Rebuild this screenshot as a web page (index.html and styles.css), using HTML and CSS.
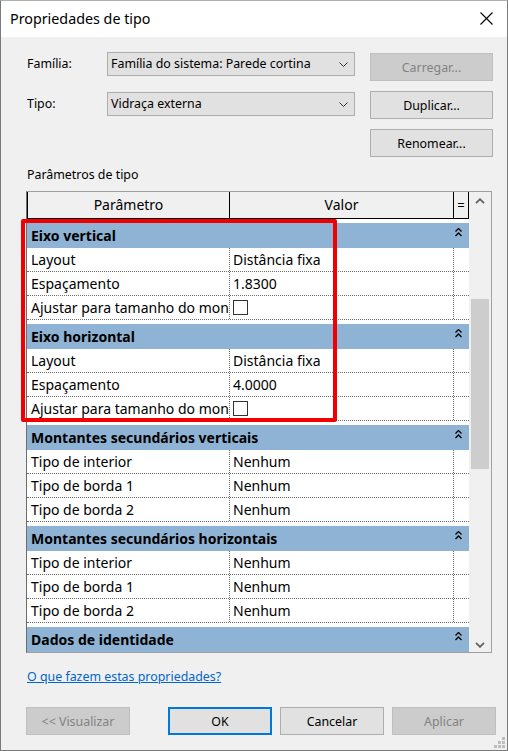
FILE: index.html
```html
<!DOCTYPE html>
<html lang="pt">
<head>
<meta charset="utf-8">
<title>Propriedades de tipo</title>
<link rel="stylesheet" href="styles.css">
</head>
<body>
<div class="window">
  <div class="titlebar">
    <span class="title">Propriedades de tipo</span>
    <svg class="close" width="13" height="13" viewBox="0 0 13 13"><path d="M0.5 0.5 L12.5 12.5 M12.5 0.5 L0.5 12.5" stroke="#000" stroke-width="1.1" fill="none"/></svg>
  </div>
  <div class="content">
    <div class="form-row r1">
      <label class="lbl">Família:</label>
      <div class="combo"><span>Família do sistema: Parede cortina</span><svg width="9" height="5" viewBox="0 0 9 5"><path d="M0.5 0.5 L4.5 4.5 L8.5 0.5" stroke="#333" fill="none"/></svg></div>
      <button class="btn disabled side">Carregar...</button>
    </div>
    <div class="form-row r2">
      <label class="lbl">Tipo:</label>
      <div class="combo"><span>Vidraça externa</span><svg width="9" height="5" viewBox="0 0 9 5"><path d="M0.5 0.5 L4.5 4.5 L8.5 0.5" stroke="#333" fill="none"/></svg></div>
      <button class="btn side">Duplicar...</button>
    </div>
    <div class="form-row r3">
      <button class="btn side col3">Renomear...</button>
    </div>
    <div class="section-label">Parâmetros de tipo</div>
    <div class="table-wrap">
      <div class="table">
        <div class="list">
          <div class="hdr">
            <div class="hc c1">Parâmetro</div>
            <div class="hc c2">Valor</div>
            <div class="hc c3">=</div>
          </div>
          <div class="grp"><div class="band"><span>Eixo vertical</span><svg class="dchev" width="7" height="9" viewBox="0 0 7 9"><path d="M0.5 3.5 L3.5 0.5 L6.5 3.5 M0.5 8 L3.5 5 L6.5 8" stroke="#000" stroke-width="1.3" fill="none"/></svg></div></div>
          <div class="row"><div class="p">Layout</div><div class="v">Distância fixa</div><div class="e"></div></div>
          <div class="row"><div class="p">Espaçamento</div><div class="v">1.8300</div><div class="e"></div></div>
          <div class="row"><div class="p tight">Ajustar para tamanho do mon</div><div class="v"><span class="chk"></span></div><div class="e"></div></div>
          <div class="grp"><div class="band"><span>Eixo horizontal</span><svg class="dchev" width="7" height="9" viewBox="0 0 7 9"><path d="M0.5 3.5 L3.5 0.5 L6.5 3.5 M0.5 8 L3.5 5 L6.5 8" stroke="#000" stroke-width="1.3" fill="none"/></svg></div></div>
          <div class="row"><div class="p">Layout</div><div class="v">Distância fixa</div><div class="e"></div></div>
          <div class="row"><div class="p">Espaçamento</div><div class="v">4.0000</div><div class="e"></div></div>
          <div class="row"><div class="p tight">Ajustar para tamanho do mon</div><div class="v"><span class="chk"></span></div><div class="e"></div></div>
          <div class="grp"><div class="band"><span>Montantes secundários verticais</span><svg class="dchev" width="7" height="9" viewBox="0 0 7 9"><path d="M0.5 3.5 L3.5 0.5 L6.5 3.5 M0.5 8 L3.5 5 L6.5 8" stroke="#000" stroke-width="1.3" fill="none"/></svg></div></div>
          <div class="row"><div class="p">Tipo de interior</div><div class="v">Nenhum</div><div class="e"></div></div>
          <div class="row"><div class="p">Tipo de borda 1</div><div class="v">Nenhum</div><div class="e"></div></div>
          <div class="row"><div class="p">Tipo de borda 2</div><div class="v">Nenhum</div><div class="e"></div></div>
          <div class="grp"><div class="band"><span>Montantes secundários horizontais</span><svg class="dchev" width="7" height="9" viewBox="0 0 7 9"><path d="M0.5 3.5 L3.5 0.5 L6.5 3.5 M0.5 8 L3.5 5 L6.5 8" stroke="#000" stroke-width="1.3" fill="none"/></svg></div></div>
          <div class="row"><div class="p">Tipo de interior</div><div class="v">Nenhum</div><div class="e"></div></div>
          <div class="row"><div class="p">Tipo de borda 1</div><div class="v">Nenhum</div><div class="e"></div></div>
          <div class="row"><div class="p">Tipo de borda 2</div><div class="v">Nenhum</div><div class="e"></div></div>
          <div class="grp"><div class="band"><span>Dados de identidade</span><svg class="dchev" width="7" height="9" viewBox="0 0 7 9"><path d="M0.5 3.5 L3.5 0.5 L6.5 3.5 M0.5 8 L3.5 5 L6.5 8" stroke="#000" stroke-width="1.3" fill="none"/></svg></div></div>
        </div>
        <div class="scrollbar">
          <div class="arrow up"><svg width="10" height="6" viewBox="0 0 10 6"><path d="M1 5.2 L5 1.2 L9 5.2" stroke="#606060" stroke-width="1.8" fill="none"/></svg></div>
          <div class="track"><div class="thumb"></div></div>
          <div class="arrow down"><svg width="10" height="6" viewBox="0 0 10 6"><path d="M1 0.8 L5 4.8 L9 0.8" stroke="#606060" stroke-width="1.8" fill="none"/></svg></div>
        </div>
      </div>
      <div class="highlight"></div>
    </div>
    <div class="link-row"><a class="help" href="#">O que fazem estas propriedades?</a></div>
    <div class="bottom-row">
      <button class="btn disabled bb">&lt;&lt; Visualizar</button>
      <button class="btn ok bb">OK</button>
      <button class="btn bb">Cancelar</button>
      <button class="btn disabled bb">Aplicar</button>
    </div>
  </div>
  <div class="grip">
    <span></span><span></span><span></span>
    <span></span><span></span><span></span>
    <span></span><span></span><span></span>
  </div>
</div>
</body>
</html>
```
FILE: styles.css
```css
html, body {
  margin: 0;
  padding: 0;
  background: #f0f0f0;
}
body {
  font-family: "Noto Sans", "Open Sans", sans-serif;
  font-size: 12.4px;
  color: #000;
}
.window {
  position: relative;
  width: 508px;
  height: 751px;
  box-sizing: border-box;
  border: 1px solid #7a7a7a;
  border-top-color: #b0b0b0;
  background: #f0f0f0;
  overflow: hidden;
}
.titlebar {
  height: 36px;
  background: #fff;
  display: flex;
  align-items: center;
  justify-content: space-between;
  padding: 0 14px 0 9px;
}
.title {
  font-size: 14.3px;
  margin-top: -2px;
}
.close {
  display: block;
  margin-top: -1px;
}
.content {
  padding: 15px 0 0 25px;
}
.form-row {
  display: grid;
  grid-template-columns: 66px 248px 123px;
  column-gap: 15px;
  align-items: start;
}
.r2, .r3 {
  margin-top: 10px;
}
.lbl {
  line-height: 24px;
  padding-left: 1px;
}
.r2 .lbl, .r2 .combo {
  margin-top: 1px;
}
.combo {
  height: 24px;
  box-sizing: border-box;
  border: 1px solid #adadad;
  background: #e1e1e1;
  display: flex;
  align-items: center;
  justify-content: space-between;
  padding: 0 6px 0 3px;
  line-height: 20px;
}
.combo svg {
  display: block;
}
.btn {
  font-family: inherit;
  font-size: 12.4px;
  color: #000;
  background: #e1e1e1;
  border: 1px solid #adadad;
  height: 28px;
  box-sizing: border-box;
  padding: 0;
  margin: 0;
}
.side {
  margin-top: 1px;
}
.r2 .side, .r3 .side {
  margin-top: 0;
}
.col3 {
  grid-column: 3;
}
.btn.disabled {
  background: #cccccc;
  border-color: #bfbfbf;
  color: #838383;
}
.btn.ok {
  border: 2px solid #0078d7;
}
.section-label {
  margin-top: 8px;
  line-height: 20px;
  padding-left: 1px;
}
.table-wrap {
  position: relative;
  margin-top: 6px;
  width: 466px;
  font-size: 14px;
}
.table {
  width: 466px;
  height: 462px;
  box-sizing: border-box;
  border: 1px solid #a0a0a0;
  border-left-color: #6d6d6d;
  background: #fff;
  display: flex;
}
.list {
  width: 442px;
  height: 460px;
  overflow: hidden;
  background: #fff;
}
.hdr {
  display: grid;
  grid-template-columns: 202px 224px 16px;
  height: 27px;
  box-sizing: border-box;
  border-bottom: 1px solid #000;
  background: #f0f0f0;
}
.hc {
  line-height: 26px;
  text-align: center;
  box-sizing: border-box;
}
.hc.c1, .hc.c2 {
  border-left: 1px solid #000;
}
.hc.c3 {
  border-left: 1px solid #000;
  border-right: 1px solid #000;
  font-size: 13px;
}
.grp {
  height: 29px;
  padding-top: 4px;
  box-sizing: border-box;
  background: #fff;
}
.band {
  height: 25px;
  background: #8eb3d4;
  display: flex;
  align-items: center;
  justify-content: space-between;
  padding: 0 7px 0 4px;
  font-weight: bold;
  white-space: nowrap;
}
.band span {
  margin-top: -1px;
}
.dchev {
  display: block;
  margin-top: -7px;
}
.row {
  display: grid;
  grid-template-columns: 202px 224px 16px;
  height: 24px;
  box-sizing: border-box;
  border-bottom: 1px dotted #6e6e6e;
}
.row > div {
  box-sizing: border-box;
  overflow: hidden;
  white-space: nowrap;
  line-height: 23px;
}
.row .p {
  padding-left: 4px;
}
.row .p.tight {
  padding-left: 4px;
  letter-spacing: 0;
}
.row .v {
  border-left: 1px dotted #6e6e6e;
  padding-left: 3px;
}
.row .e {
  border-left: 1px dotted #6e6e6e;
}
.chk {
  display: block;
  width: 15px;
  height: 15px;
  box-sizing: border-box;
  border: 1px solid #333;
  background: #fff;
  margin-top: 4px;
}
.scrollbar {
  width: 22px;
  height: 460px;
  background: #f0f0f0;
  display: flex;
  flex-direction: column;
}
.arrow {
  height: 21px;
  display: flex;
  align-items: center;
  justify-content: center;
}
.arrow svg {
  display: block;
}
.arrow.up svg {
  margin-top: -4px;
}
.arrow.down svg {
  margin-top: 6px;
}
.track {
  flex: 1;
  padding: 86px 2px 0 2px;
}
.thumb {
  height: 170px;
  background: #cdcdcd;
}
.highlight {
  position: absolute;
  left: -5px;
  top: 28px;
  width: 316px;
  height: 203px;
  box-sizing: border-box;
  border: 4px solid #f00000;
  border-radius: 2px;
  pointer-events: none;
}
.link-row {
  margin-top: 14px;
  line-height: 20px;
  padding-left: 1px;
}
.help {
  color: #0066cc;
  text-decoration: underline;
}
.bottom-row {
  display: flex;
  margin-top: 20px;
}
.bb {
  width: 104px;
  margin-right: 8px;
}
.bb:first-child {
  margin-right: 38px;
}
.grip {
  position: absolute;
  right: 2px;
  bottom: 2px;
  display: grid;
  grid-template-columns: repeat(3, 3px);
  grid-template-rows: repeat(3, 3px);
  gap: 1px;
}
.grip span {
  background: #bdbdbd;
}
.grip span:nth-child(1), .grip span:nth-child(2), .grip span:nth-child(4) {
  background: transparent;
}
```
